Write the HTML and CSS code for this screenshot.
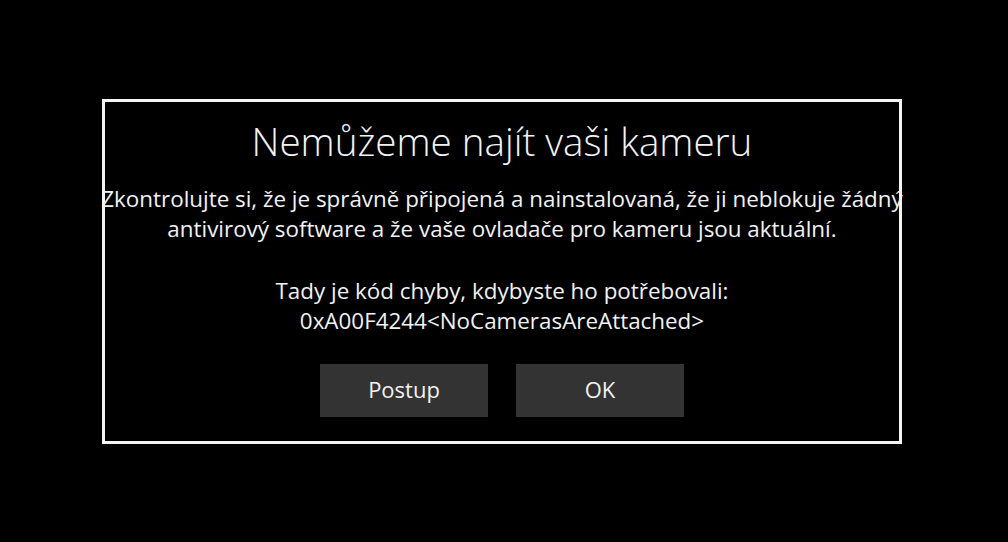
FILE: index.html
```html
<!DOCTYPE html>
<html lang="cs">
<head>
<meta charset="utf-8">
<title>Kamera</title>
<link rel="stylesheet" href="styles.css">
</head>
<body>
<div class="dialog">
  <h1 class="title">Nemůžeme najít vaši kameru</h1>
  <p class="message">Zkontrolujte si, že je správně připojená a nainstalovaná, že ji neblokuje žádný<br>antivirový software a že vaše ovladače pro kameru jsou aktuální.</p>
  <p class="code">Tady je kód chyby, kdybyste ho potřebovali:<br>0xA00F4244&lt;NoCamerasAreAttached&gt;</p>
  <div class="actions">
    <button class="btn">Postup</button>
    <button class="btn">OK</button>
  </div>
</div>
</body>
</html>
```
FILE: styles.css
```css
html, body {
  margin: 0;
  padding: 0;
  background: #000;
  height: 100%;
}
body {
  font-family: "Open Sans", "Noto Sans", sans-serif;
  color: #f2f2f2;
  padding-top: 99px;
  box-sizing: border-box;
}
.dialog {
  margin-left: 102px;
  width: 800px;
  height: 345px;
  box-sizing: border-box;
  border: 3px solid #f4f4f4;
  display: flex;
  flex-direction: column;
  align-items: center;
}
.title {
  margin: 15px 0 0;
  font-weight: 300;
  font-size: 38.6px;
  line-height: 48px;
  white-space: nowrap;
}
.message, .code {
  margin: 0;
  font-size: 22.4px;
  line-height: 30px;
  text-align: center;
  white-space: nowrap;
}
.message {
  margin-top: 19px;
}
.code {
  margin-top: 32px;
}
.actions {
  display: flex;
  gap: 28px;
  margin-top: 28px;
}
.btn {
  width: 168px;
  height: 53px;
  background: #333;
  color: #f2f2f2;
  border: none;
  font-family: inherit;
  font-size: 22px;
  padding: 0 0 3px;
}
```
